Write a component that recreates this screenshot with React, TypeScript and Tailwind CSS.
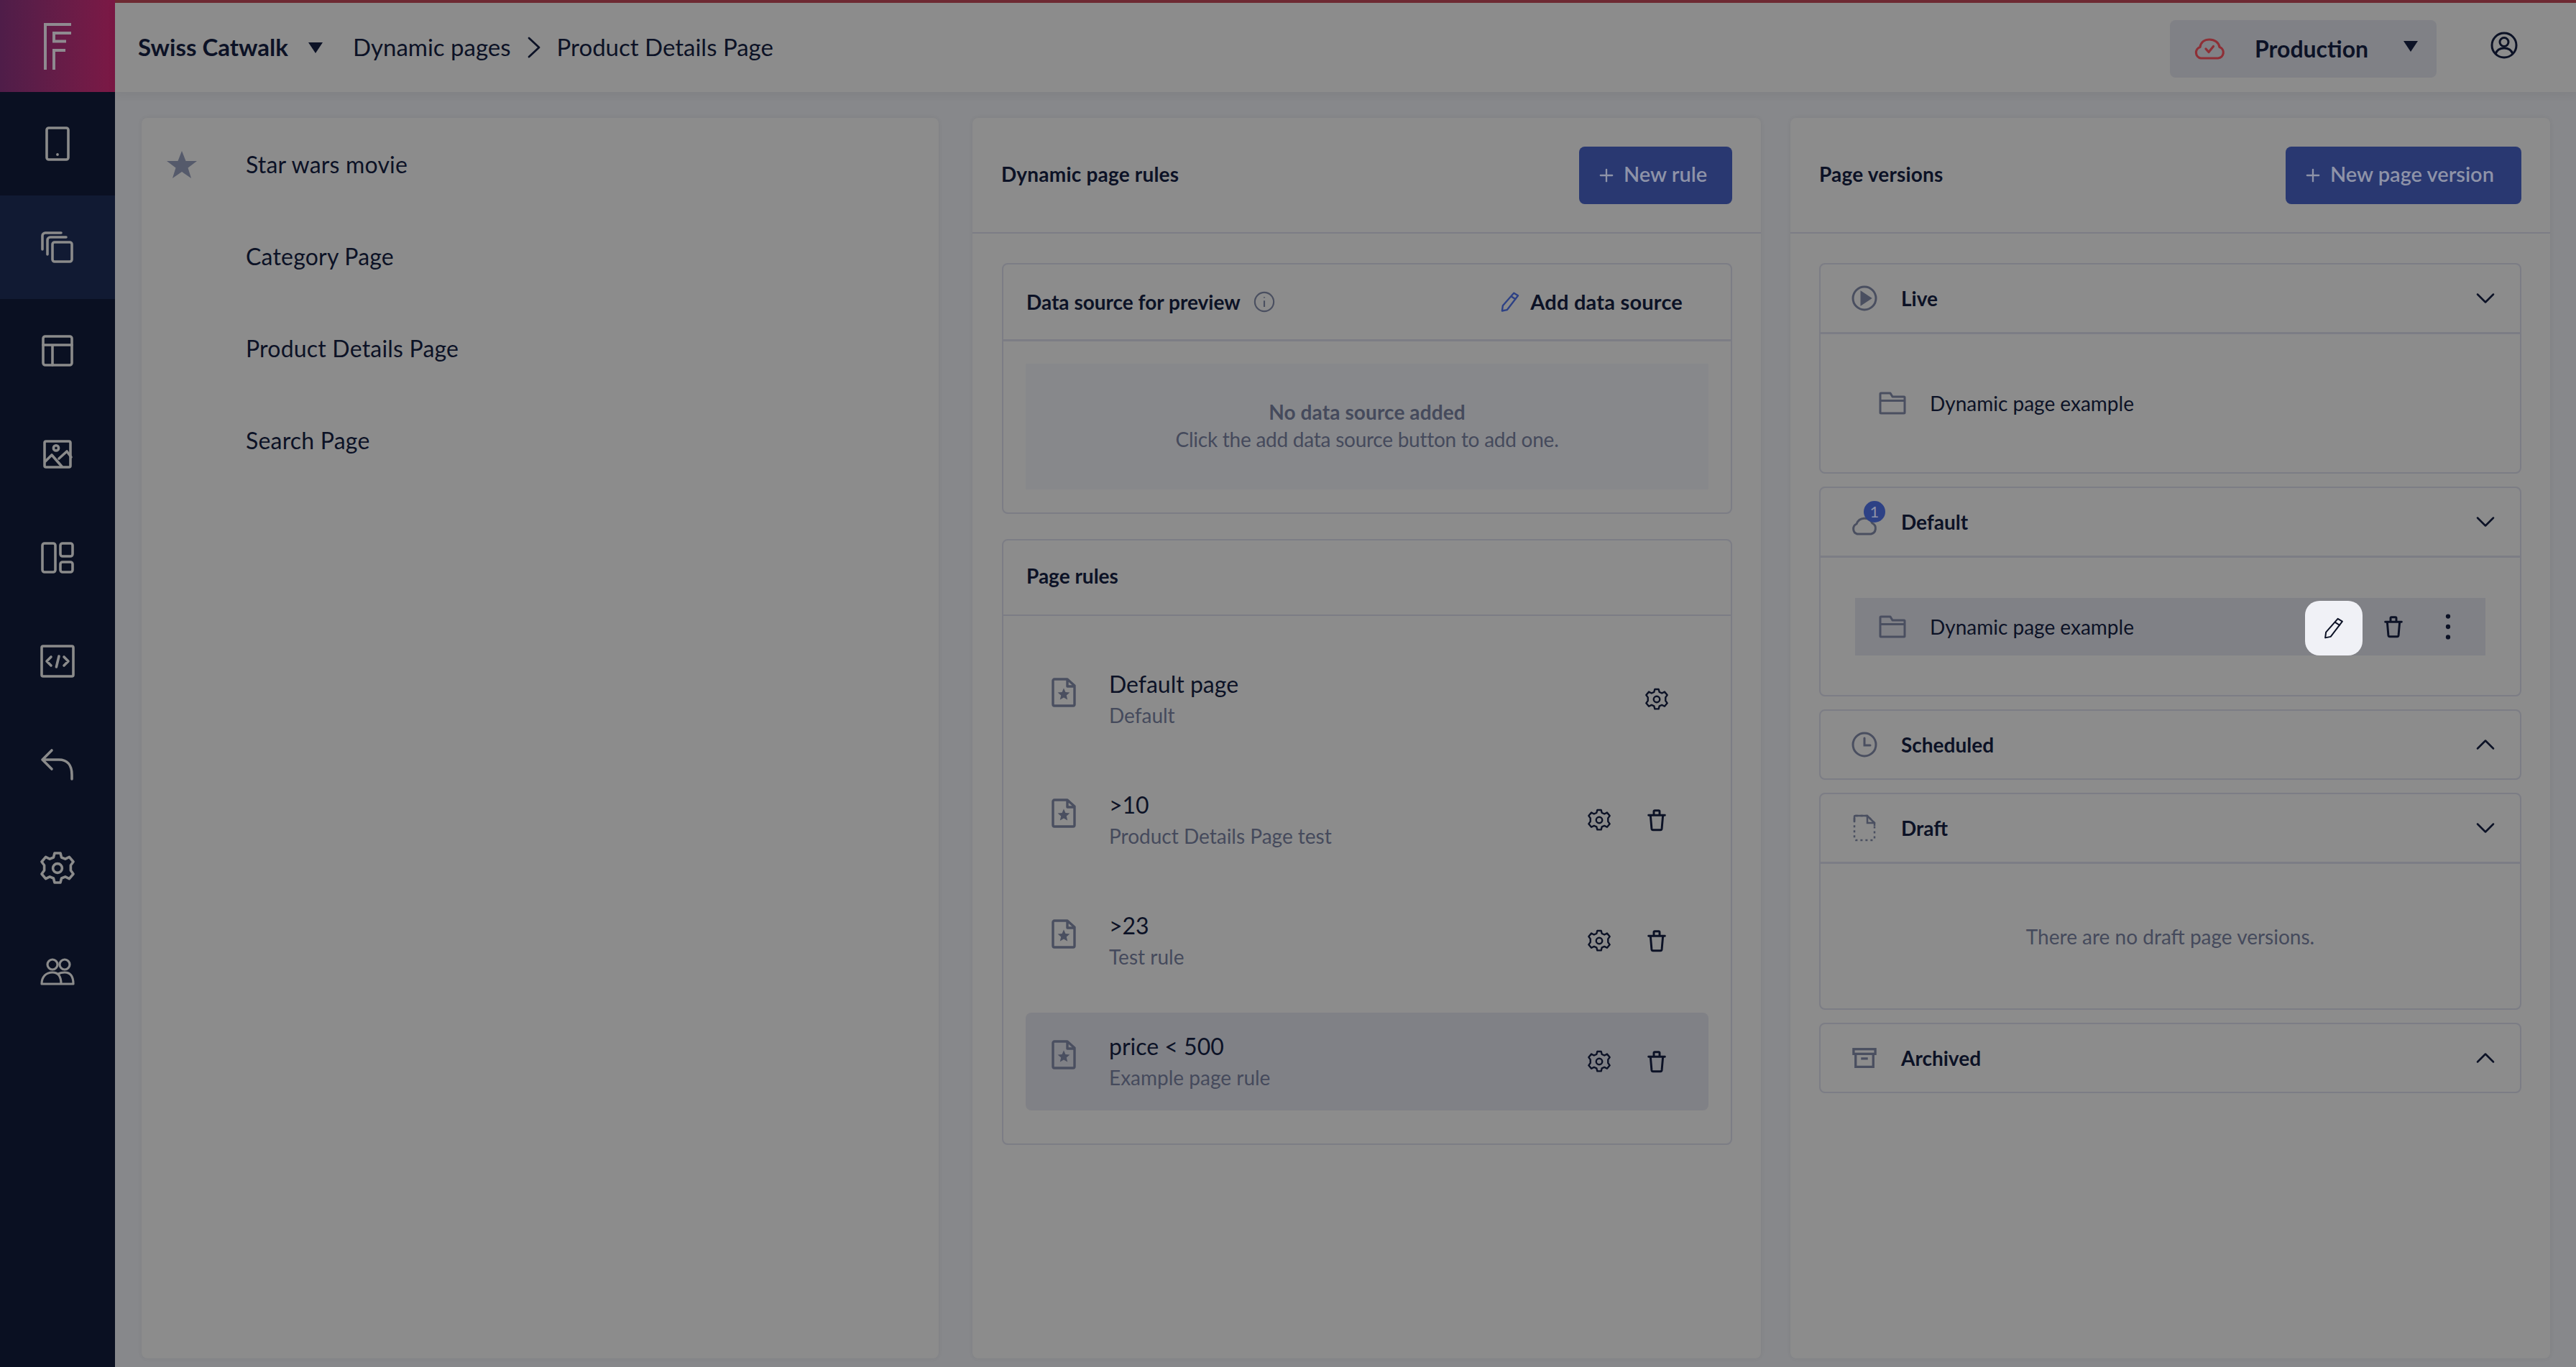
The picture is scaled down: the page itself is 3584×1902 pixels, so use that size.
import { ReactNode } from 'react'
import { Plus, ChevronDown, ChevronUp } from 'lucide-react'

type IconProps = { className?: string; w?: number; children: ReactNode }

// every drawing here sits on a 24 unit grid
function Ico({ className, children, w = 1.8 }: IconProps) {
  return (
    <svg viewBox="0 0 24 24" fill="none" stroke="currentColor" strokeWidth={w} strokeLinecap="round" strokeLinejoin="round" className={className}>
      {children}
    </svg>
  )
}

const Phone = ({ className }: { className?: string }) => (
  <Ico className={className}><rect x="4.500" y="1" width="15" height="22" rx="1.400" /><path d="M12 19.400v.2" /></Ico>
)
const Pages = ({ className }: { className?: string }) => (
  <Ico className={className}><rect x="8.500" y="8.500" width="13.500" height="13.500" rx="1.500" /><path d="M5 17V7a2 2 0 0 1 2-2h11" /><path d="M1.500 13.500V4a2 2 0 0 1 2-2h11" /></Ico>
)
const Layout = ({ className }: { className?: string }) => (
  <Ico className={className}><rect x="2" y="2" width="20" height="20" rx="1.500" /><path d="M2 8h20M8.500 8v14" /></Ico>
)
const ImageIco = ({ className }: { className?: string }) => (
  <Ico className={className}><rect x="3" y="3" width="18" height="18" rx="1" /><circle cx="11" cy="7.700" r="1.800" /><path d="M3.500 17L8 12.500 15 20.500M13 15l5.500-5 3 4" /></Ico>
)
const Dash = ({ className }: { className?: string }) => (
  <Ico className={className}><rect x="1.500" y="2" width="9" height="20" rx="1.500" /><rect x="14" y="2" width="8.500" height="9" rx="1.500" /><rect x="14" y="15" width="8.500" height="7" rx="1.500" /></Ico>
)
const Code = ({ className }: { className?: string }) => (
  <Ico className={className}><rect x="1" y="1.500" width="22" height="21" rx="1" /><path d="M7.500 9l-3 3 3 3M16.500 9l3 3-3 3M13 8.500l-1.800 7.500" /></Ico>
)
const Reply = ({ className }: { className?: string }) => (
  <Ico className={className}><path d="M8 2L1.500 8.500 8 15M1.500 8.500H13c5.500 0 9 3.500 9 10.500v3" /></Ico>
)
const Gear = ({ className, w }: { className?: string; w?: number }) => (
  <Ico className={className} w={w}>
    <path d="M10 1.500h4l.8 3 2.600 1.100 2.800-1.400 2.800 3.300-1.800 2.500v3.500l1.800 2.500-2.800 3.300-2.800-1.400-2.600 1.100-.8 3h-4l-.8-3-2.600-1.100-2.800 1.400-2.800-3.300 1.800-2.500v-3.500l-1.800-2.500 2.800-3.300 2.800 1.400 2.600-1.100z" />
    <circle cx="12" cy="12" r="3.200" />
  </Ico>
)
const Users = ({ className }: { className?: string }) => (
  <Ico className={className} w={1.600}><circle cx="8.500" cy="7" r="3.500" /><circle cx="17" cy="7" r="3.500" /><path d="M1 20.500c0-5 3-8 7.500-8 4 0 6 3 6 8zM12.500 13.500c1.200-.7 2.700-1 4.500-1 4 0 6 3 6 8h-8.500" /></Ico>
)
const Trash = ({ className }: { className?: string }) => (
  <Ico className={className} w={2.200}><path d="M3.500 7h17M9 6.500V3a1 1 0 0 1 1-1h4a1 1 0 0 1 1 1v3.500M5.500 7l1.200 14a1.500 1.500 0 0 0 1.500 1.300h7.600a1.500 1.500 0 0 0 1.500-1.300L18.500 7" /></Ico>
)
const Pencil = ({ className, w = 1.600 }: { className?: string; w?: number }) => (
  <Ico className={className} w={w}><path d="M16.500 1.500l5 3L8.500 21.500l-6 1.200.8-6.200zM13.500 5.500l5 3.200" /></Ico>
)
const RuleFile = ({ className }: { className?: string }) => (
  <svg viewBox="0 0 34 41" className={className} fill="none" stroke="currentColor" strokeWidth="3.400" strokeLinejoin="round">
    <path d="M22 2H4a2 2 0 0 0-2 2v33a2 2 0 0 0 2 2h26a2 2 0 0 0 2-2V11zM22 3v9h9" />
    <path d="M17 14.500l2.400 5.600 6 .5-4.600 4 1.400 6-5.200-3.200-5.200 3.200 1.400-6-4.600-4 6-.5z" fill="currentColor" stroke="none" />
  </svg>
)
const Folder = ({ className }: { className?: string }) => (
  <svg viewBox="0 0 38 32" className={className} fill="none" stroke="currentColor" strokeWidth="3" strokeLinejoin="round">
    <path d="M2 29V3a1 1 0 0 1 1-1h13l3 5h16a1 1 0 0 1 1 1v21a1 1 0 0 1-1 1H3a1 1 0 0 1-1-1zM2 12.500h34" />
  </svg>
)
const Caret = ({ className }: { className?: string }) => (
  <svg viewBox="0 0 20 16" className={className} fill="currentColor"><path d="M0 1h20L10 16z" /></svg>
)

const navIcons = [Phone, Pages, Layout, ImageIco, Dash, Code, Reply, Gear, Users]

function Sidebar() {
  return (
    <div className="w-[160px] shrink-0 flex flex-col bg-[#0a1022]">
      <div className="h-[128px] flex items-center justify-center bg-gradient-to-r from-[#4f1d49] to-[#7c1845]">
        <svg viewBox="0 0 40 66" className="w-[40px] h-[66px] text-[#8f8a90]" fill="none" stroke="currentColor" strokeWidth="4">
          <path d="M3 66V3h36M39 15H15v11.500h17M15 66V39h16" />
        </svg>
      </div>
      {navIcons.map((Icon, i) => (
        <div key={i} className={`h-[144px] flex items-center justify-center text-[#8b8b8b] ${i === 1 ? 'bg-[#111a33]' : ''}`}>
          <Icon className="w-[48px] h-[48px]" />
        </div>
      ))}
    </div>
  )
}

function TopBar() {
  return (
    <div className="h-[128px] shrink-0 border-t-4 border-[#6e2a33] bg-[#8c8c8c] flex items-center pl-[32px] pr-[81px] text-[33px] text-[#0c1226] shadow-[0_4px_12px_rgba(0,0,0,0.06)] relative">
      <span className="font-bold">Swiss Catwalk</span>
      <Caret className="w-[20px] h-[16px] ml-[28px] mr-[42px]" />
      <span>Dynamic pages</span>
      <svg viewBox="0 0 18 30" className="w-[18px] h-[30px] ml-[23px] mr-[23px]" fill="none" stroke="currentColor" strokeWidth="2.800" strokeLinecap="round" strokeLinejoin="round">
        <path d="M2 2l14 13L2 28" />
      </svg>
      <span>Product Details Page</span>
      <div className="ml-auto mt-[4px] w-[371px] h-[80px] rounded-[8px] bg-[#808186] flex items-center pl-[33px] text-[32px]">
        <svg viewBox="0 0 44 30" className="w-[44px] h-[30px] text-[#8e2f36]" fill="none" stroke="currentColor" strokeWidth="3.200" strokeLinecap="round" strokeLinejoin="round">
          <path d="M10 28H34a8 8 0 0 0 2-15.500C35 6 29 2 22 2S10 6 9 12.500A8 8 0 0 0 10 28Z" />
          <path d="M17 15l4 4.500 6.500-8" />
        </svg>
        <span className="font-bold ml-[41px]">Production</span>
        <Caret className="w-[20px] h-[16px] ml-[49px] -mt-[8px]" />
      </div>
      <svg viewBox="0 0 38 38" className="w-[38px] h-[38px] ml-[75px] -mt-[6px]" fill="none" stroke="currentColor" strokeWidth="3">
        <circle cx="19" cy="19" r="17" />
        <circle cx="19" cy="14.500" r="6" />
        <path d="M7 31c2-6 6-8 12-8s10 2 12 8" />
      </svg>
    </div>
  )
}

const pagesList = ['Star wars movie', 'Category Page', 'Product Details Page', 'Search Page']

function PagesPanel() {
  return (
    <div className="w-[1109px] h-[1726px] shrink-0 rounded-[8px] bg-[#8c8c8c] shadow-[0_0_6px_rgba(0,0,0,0.06)] pt-[1px]">
      {pagesList.map((name, i) => (
        <div key={name} className="h-[128px] flex items-center">
          <div className="w-[112px] mr-[33px] flex justify-center">
            {i === 0 && (
              <svg viewBox="0 0 42 38" className="w-[42px] h-[38px] text-[#555a6b]" fill="currentColor"><path d="M21 0l5.500 14H42l-12.500 9.500L34 38 21 29 8 38l4.500-14.500L0 14h15.500z" /></svg>
            )}
          </div>
          <span className="text-[32px] tracking-[0.2px] text-[#0c1226]">{name}</span>
        </div>
      ))}
    </div>
  )
}

function PanelHead({ title, action, width }: { title: string; action: string; width: string }) {
  return (
    <div className="h-[161px] shrink-0 border-b-2 border-[#7c7d85] flex items-center justify-between px-[40px]">
      <span className="text-[28px] font-bold tracking-[0.2px] text-[#0c1226] -mt-[3px]">{title}</span>
      <button className={`h-[80px] ${width} rounded-[8px] bg-[#293871] text-[#8e93a8] text-[29px] font-semibold flex items-center pl-[24px] pb-[3px] gap-[10px]`}>
        <Plus className="w-[28px] h-[28px] mt-[3px]" strokeWidth={2} />
        {action}
      </button>
    </div>
  )
}

const rules = [
  { title: 'Default page', sub: 'Default', del: false },
  { title: '>10', sub: 'Product Details Page test', del: true },
  { title: '>23', sub: 'Test rule', del: true },
  { title: 'price < 500', sub: 'Example page rule', del: true, active: true },
]

function RulesPanel() {
  return (
    <div className="w-[1097px] h-[1726px] shrink-0 ml-[47px] rounded-[8px] bg-[#8c8c8c] shadow-[0_0_6px_rgba(0,0,0,0.06)] flex flex-col">
      <PanelHead title="Dynamic page rules" action="New rule" width="w-[213px]" />
      <div className="pl-[41px] pr-[40px]">
        <div className="mt-[41px] h-[349px] border-2 border-[#7c7d85] rounded-[8px] flex flex-col">
          <div className="h-[107px] shrink-0 border-b-[3px] border-[#7c7d85] flex items-center pl-[32px] pr-[67px] text-[#0c1226]">
            <span className="text-[28px] font-bold">Data source for preview</span>
            <svg viewBox="0 0 24 24" className="w-[30px] h-[30px] ml-[18px] text-[#4a4f60]" fill="none" stroke="currentColor" strokeWidth="1.700"><circle cx="12" cy="12" r="10.500" /><path d="M12 10.500v7M12 6.500v1" /></svg>
            <div className="ml-auto flex items-center gap-[14px]">
              <Pencil className="w-[28px] h-[28px] text-[#2d4185]" w={2} />
              <span className="text-[29px] font-bold tracking-[0.2px]">Add data source</span>
            </div>
          </div>
          <div className="mx-[31px] mt-[31px] h-[175px] rounded-[2px] bg-[#87888b] flex flex-col items-center justify-center pb-[4px] text-[#454a5c] text-[28px] leading-[38px]">
            <span className="font-bold tracking-[0.1px]">No data source added</span>
            <span className="tracking-[-0.25px]">Click the add data source button to add one.</span>
          </div>
        </div>
        <div className="mt-[35px] h-[843px] border-2 border-[#7c7d85] rounded-[8px] flex flex-col">
          <div className="h-[105px] shrink-0 border-b-2 border-[#7c7d85] flex items-center pl-[32px] pb-[6px] text-[28px] font-bold text-[#0c1226]">Page rules</div>
          <div className="px-[31px] pt-[48px] flex flex-col gap-[32px]">
            {rules.map((r) => (
              <div key={r.title} className={`h-[136px] rounded-[8px] flex items-center pl-[36px] pr-[56px] ${r.active ? 'bg-[#808186]' : ''}`}>
                <RuleFile className="w-[34px] h-[41px] text-[#4a4f60] -mt-[20px]" />
                <div className="ml-[46px] flex flex-col">
                  <span className="text-[32px] leading-[44px] text-[#0c1226]">{r.title}</span>
                  <span className="text-[28px] leading-[42px] text-[#454a5c]">{r.sub}</span>
                </div>
                <div className="ml-auto flex items-center gap-[48px] text-[#0c1226]">
                  <Gear className="w-[32px] h-[32px]" w={1.800} />
                  {r.del && <Trash className="w-[32px] h-[32px]" />}
                </div>
              </div>
            ))}
          </div>
        </div>
      </div>
    </div>
  )
}

function VersionCard({ icon, title, open, children, badge }: { icon: ReactNode; title: string; open: boolean; children?: ReactNode; badge?: boolean }) {
  return (
    <div className="border-2 border-[#7c7d85] rounded-[8px] flex flex-col">
      <div className={`shrink-0 flex items-center pl-[42px] pr-[26px] ${children ? 'h-[97px] border-b-[3px] border-[#7c7d85]' : 'h-[94px]'}`}>
        <div className="relative w-[38px] h-[38px] text-[#4a4f60] flex items-center justify-center">
          {icon}
          {badge && (
            <span className="absolute -top-[10px] left-[18px] w-[30px] h-[30px] rounded-full bg-[#2d4185] text-[#8e93a8] text-[22px] leading-[30px] text-center">1</span>
          )}
        </div>
        <span className="ml-[32px] text-[28px] font-bold text-[#0c1226]">{title}</span>
        <span className="ml-auto text-[#0c1226]">
          {open ? <ChevronDown className="w-[44px] h-[44px]" strokeWidth={1.400} /> : <ChevronUp className="w-[44px] h-[44px]" strokeWidth={1.400} />}
        </span>
      </div>
      {children}
    </div>
  )
}

function VersionsPanel() {
  return (
    <div className="w-[1057px] h-[1726px] shrink-0 ml-[41px] rounded-[8px] bg-[#8c8c8c] shadow-[0_0_6px_rgba(0,0,0,0.06)] flex flex-col">
      <PanelHead title="Page versions" action="New page version" width="w-[328px]" />
      <div className="mt-[41px] px-[40px] flex flex-col gap-[18px]">
        <VersionCard
          title="Live"
          open
          icon={<svg viewBox="0 0 36 36" className="w-[36px] h-[36px]" fill="none" stroke="currentColor" strokeWidth="3"><circle cx="18" cy="18" r="16" /><path d="M14 10l12 8-12 8z" fill="currentColor" /></svg>}
        >
          <div className="h-[192px] flex items-center pl-[81px]">
            <Folder className="w-[38px] h-[32px] text-[#4a4f60]" />
            <span className="ml-[33px] text-[28px] text-[#0c1226]">Dynamic page example</span>
          </div>
        </VersionCard>
        <VersionCard
          title="Default"
          open
          badge
          icon={<svg viewBox="0 0 38 26" className="w-[38px] h-[26px] mt-[12px]" fill="none" stroke="currentColor" strokeWidth="3"><path d="M9 24H28A8 8 0 0 0 30 9 12 12 0 0 0 8 10 7.500 7.500 0 0 0 9 24Z" /></svg>}
        >
          <div className="h-[191px] pt-[56px] px-[48px]">
            <div className="h-[80px] bg-[#808186] flex items-center pl-[33px] pr-[48px]">
              <Folder className="w-[38px] h-[32px] text-[#4a4f60]" />
              <span className="ml-[33px] text-[28px] text-[#0c1226]">Dynamic page example</span>
              <div className="ml-auto flex items-center text-[#0c1226]">
                <div className="w-[80px] h-[76px] mt-[4px] rounded-[20px] bg-[#f0f1f6] flex items-center justify-center">
                  <Pencil className="w-[30px] h-[30px]" />
                </div>
                <Trash className="w-[32px] h-[32px] ml-[27px]" />
                <svg viewBox="0 0 8 40" className="w-[8px] h-[36px] ml-[56px]" fill="currentColor"><circle cx="4" cy="4" r="3.500" /><circle cx="4" cy="20" r="3.500" /><circle cx="4" cy="36" r="3.500" /></svg>
              </div>
            </div>
          </div>
        </VersionCard>
        <VersionCard
          title="Scheduled"
          open={false}
          icon={<svg viewBox="0 0 36 36" className="w-[36px] h-[36px]" fill="none" stroke="currentColor" strokeWidth="3" strokeLinecap="round"><circle cx="18" cy="18" r="16" /><path d="M18 9v10h8" /></svg>}
        />
        <VersionCard
          title="Draft"
          open
          icon={<svg viewBox="0 0 32 38" className="w-[32px] h-[38px]" fill="none" stroke="currentColor" strokeWidth="2.500"><path d="M2 8V3a1 1 0 0 1 1-1h17l10 10v22a2 2 0 0 1-2 2H4a2 2 0 0 1-2-2V8" strokeDasharray="3 4" /><path d="M2 10V3a1 1 0 0 1 1-1h17l10 10v4M20 2v10h10" /></svg>}
        >
          <div className="h-[201px] flex items-center justify-center text-[28px] text-[#454a5c]">There are no draft page versions.</div>
        </VersionCard>
        <VersionCard
          title="Archived"
          open={false}
          icon={<svg viewBox="0 0 36 30" className="w-[34px] h-[30px]" fill="none" stroke="currentColor" strokeWidth="3.500"><rect x="2" y="2" width="32" height="7" /><path d="M5 9v19h26V9M13 16h10" /></svg>}
        />
      </div>
    </div>
  )
}

export default function App() {
  return (
    <div className="w-[3584px] h-[1902px] flex overflow-hidden bg-[#87888b] font-['Lato','Noto_Sans',sans-serif]">
      <Sidebar />
      <div className="flex-1 flex flex-col min-w-0">
        <TopBar />
        <div className="flex pt-[36px] pl-[37px]">
          <PagesPanel />
          <RulesPanel />
          <VersionsPanel />
        </div>
      </div>
    </div>
  )
}
